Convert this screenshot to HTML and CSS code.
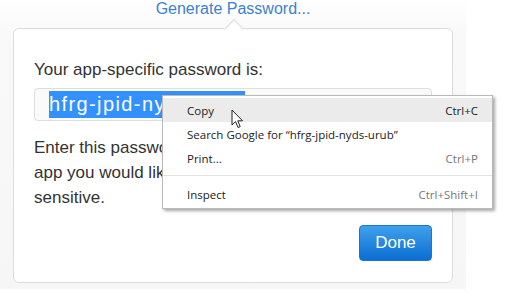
FILE: index.html
```html
<!DOCTYPE html>
<html lang="en">
<head>
    <meta charset="UTF-8">
    <title>App-Specific Password</title>
    <link rel="stylesheet" href="styles.css">
</head>
<body>
    <div class="page">
        <div class="link-row">
            <a class="generate-link" href="#">Generate Password...</a>
        </div>

        <div class="card">
            <p class="label">Your app-specific password is:</p>
            <div class="password-field">
                <span class="selected">hfrg-jpid-nyds-urub</span>
            </div>
            <p class="hint">Enter this password in the password field of the<br>app you would like to use. Passwords are case<br>sensitive.</p>
            <div class="actions">
                <button class="done-btn">Done</button>
            </div>
        </div>

        <!-- right-click menu over the selection -->
        <div class="context-menu">
            <div class="menu-item active"><span>Copy</span><span class="shortcut dark">Ctrl+C</span></div>
            <div class="menu-item"><span>Search Google for &ldquo;hfrg-jpid-nyds-urub&rdquo;</span></div>
            <div class="menu-item"><span>Print...</span><span class="shortcut">Ctrl+P</span></div>
            <div class="menu-sep"></div>
            <div class="menu-item"><span>Inspect</span><span class="shortcut">Ctrl+Shift+I</span></div>
        </div>

        <svg class="cursor" width="13" height="20" viewBox="0 0 13 20">
            <path d="M1 1 L1 16 L4.5 12.5 L7 18.5 L9.2 17.6 L6.8 11.8 L11.5 11.8 Z" fill="#fff" stroke="#222" stroke-width="1" stroke-linejoin="round"/>
        </svg>
    </div>
</body>
</html>
```

FILE: styles.css
```css
body {
    margin: 0;
    background-color: white;
    font-family: "Liberation Sans", Arial, sans-serif;
    color: #333;
}
.page {
    position: relative;
    width: 466px;
    height: 289px;
    background: linear-gradient(to bottom, #ffffff 0, #f9f9f9 30px, #f6f6f6 100%);
}
.link-row {
    height: 28px;
    text-align: center;
}
.generate-link {
    display: inline-block;
    margin-top: -4px;
    color: #3b82cf;
    font-size: 16px;
    text-decoration: none;
}
.card {
    position: relative;
    margin-left: 13px;
    width: 398px;
    height: 222px;
    padding: 31px 20px 0 20px;
    background-color: white;
    border: 1px solid #dcdcdc;
    border-radius: 6px;
}
.card::before {
    content: "";
    position: absolute;
    left: 213px;
    top: -7px;
    width: 13px;
    height: 13px;
    background: white;
    border-left: 1px solid #dcdcdc;
    border-top: 1px solid #dcdcdc;
    transform: rotate(45deg);
}
.label {
    margin: 0;
    font-size: 17px;
    line-height: 20px;
}
.password-field {
    margin-top: 8px;
    height: 31px;
    border: 1px solid #dedede;
    border-radius: 4px;
    background-color: #fafafa;
    padding-left: 14px;
    display: flex;
    align-items: center;
}
.selected {
    background-color: #3390ff;
    color: white;
    font-size: 20px;
    letter-spacing: 1.4px;
    line-height: 27px;
    padding-right: 2px;
}
.hint {
    margin: 14px 0 0 0;
    font-size: 17px;
    line-height: 25px;
}
.actions {
    display: flex;
    justify-content: flex-end;
    margin-top: 15px;
}
.done-btn {
    width: 73px;
    height: 36px;
    border: 1px solid #1a75d0;
    border-radius: 4px;
    background: linear-gradient(to bottom, #40a0ec, #0a6ed3);
    color: white;
    font-family: "Liberation Sans", Arial, sans-serif;
    font-size: 17px;
}
.context-menu {
    position: absolute;
    left: 162px;
    top: 95px;
    width: 329px;
    padding: 2px 0;
    background-color: white;
    border: 1px solid #b9b9b9;
    box-shadow: 2px 2px 3px rgba(0,0,0,0.35);
    font-family: "Open Sans", "Noto Sans", sans-serif;
    font-size: 11.5px;
    color: #222;
}
.menu-item {
    height: 24px;
    padding: 0 14px 0 24px;
    display: flex;
    justify-content: space-between;
    align-items: center;
}
.menu-item.active {
    background-color: #ebebeb;
}
.shortcut {
    color: #777;
}
.shortcut.dark {
    color: #222;
}
.menu-sep {
    height: 1px;
    margin: 5px 0 6px 0;
    background-color: #e3e3e3;
}
.cursor {
    position: absolute;
    left: 231px;
    top: 109px;
}
```
